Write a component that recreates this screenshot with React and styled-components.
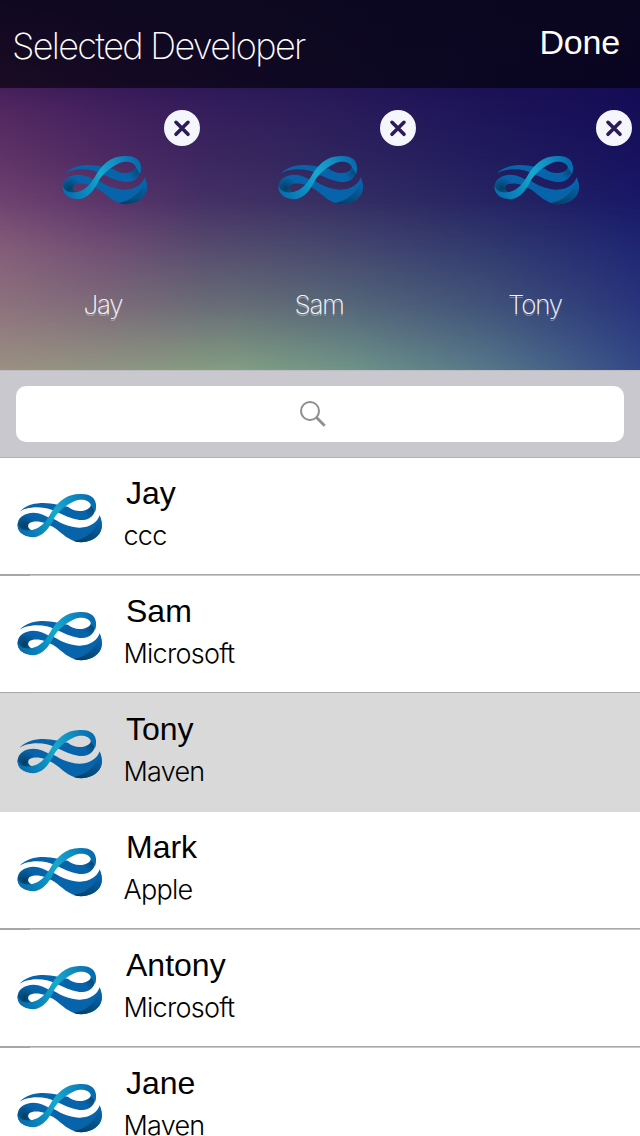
import React, { useState } from 'react';
import styled, { createGlobalStyle, css } from 'styled-components';

const GlobalStyle = createGlobalStyle`
  * { box-sizing: border-box; }
  body { margin: 0; background: #fff; overflow: hidden; }
`;

const light = css`
  font-family: Inter, "Liberation Sans", sans-serif;
  font-weight: 300;
`;

const Screen = styled.main`
  width: 640px;
  height: 1136px;
  overflow: hidden;
  background: #fff;
  color: #000;
  font-family: "Liberation Sans", Arial, sans-serif;
`;

const Hero = styled.section`
  position: relative;
  isolation: isolate;
  height: 370px;
  background:
    linear-gradient(180deg, rgba(30, 18, 80, 0.75) 0, rgba(30, 18, 80, 0) 110px),
    linear-gradient(90deg, #4a205c 0%, #37195a 22%, #281858 48%, #1b1056 75%, #140a54 100%);

  &::before,
  &::after {
    content: '';
    position: absolute;
    inset: 0;
    z-index: -1;
  }
  &::before {
    background: linear-gradient(90deg, #805478 0%, #6b4272 16%, #4e3d6b 32%, #403b69 50%, #2c3069 75%, #1c2070 100%);
    mask-image: linear-gradient(180deg, transparent 80px, rgba(0, 0, 0, 0.4) 160px, #000 250px);
  }
  &::after {
    background: linear-gradient(90deg, #9c9282 0%, #8f9982 20%, #84a283 37%, #70978a 55%, #587a8b 76%, #354b88 100%);
    mask-image: linear-gradient(180deg, transparent 200px, rgba(0, 0, 0, 0.16) 250px, rgba(0, 0, 0, 0.48) 305px, #000 375px);
  }
`;

const Header = styled.header`
  display: flex;
  justify-content: space-between;
  height: 88px;
  padding: 0 20px 0 12px;
  background: rgba(0, 0, 0, 0.6);
  color: #fff;
`;

const Title = styled.h1`
  margin: 0;
  font-family: Inter, "Liberation Sans", sans-serif;
  font-size: 36px;
  font-weight: 200;
  line-height: 92px;
  letter-spacing: -1.65px;
`;

const DoneButton = styled.button`
  align-self: flex-start;
  padding: 0;
  border: 0;
  background: none;
  color: inherit;
  font: 34px/84px "Liberation Sans", Arial, sans-serif;
  letter-spacing: -0.2px;
`;

const SelectedList = styled.div`
  display: flex;
  gap: 6px;
  height: 282px;
`;

const SelectedCard = styled.article`
  position: relative;
  display: flex;
  flex-direction: column;
  align-items: center;
  flex: 0 0 210px;
  padding-top: 67px;
`;

const RemoveButton = styled.button`
  position: absolute;
  top: 22px;
  right: 10px;
  width: 36px;
  height: 36px;
  padding: 0;
  border: 0;
  border-radius: 50%;
  background: #f5f6fb;
  color: #2c1b5b;

  svg { display: block; }
`;

const SelectedName = styled.span`
  ${light}
  margin-top: 84px;
  padding-right: 4px;
  color: #f4f4f8;
  font-size: 26px;
  font-weight: 200;
  line-height: 32px;
  letter-spacing: -1.2px;
  text-shadow: 0 2px 0 rgba(255, 255, 255, 0.3);
`;

const SearchBar = styled.div`
  height: 88px;
  padding: 15px 16px;
  border-top: 1px solid #bdbcc1;
  border-bottom: 1px solid #b2b1b6;
  background: #c9c8ce;
`;

const SearchField = styled.label`
  display: flex;
  align-items: center;
  height: 56px;
  padding-left: 283px;
  border-radius: 10px;
  background: #fff;
`;

const List = styled.ul`
  margin: 0;
  padding: 0;
  list-style: none;
`;

const Row = styled.li`
  display: flex;
  height: 118px;
  padding: 35px 0 0 17px;
  background:
    linear-gradient(#a6a6a6, #a6a6a6) 0 100% / 30px 2px no-repeat,
    linear-gradient(#a9a9a9 50%, #c8c8c8 50%) 0 100% / 100% 2px no-repeat;

  ${({ $selected }) => $selected && css`
    height: 119px;
    margin-top: -1px;
    padding-top: 36px;
    background: #d9d9d9;
  `}
`;

const Details = styled.div`
  display: flex;
  flex-direction: column;
  margin: -18px 0 0 23px;
`;

const Name = styled.span`
  font-size: 32px;
  line-height: 36px;
`;

const Company = styled.span`
  ${light}
  margin: 9px 0 0 -2.5px;
  font-size: 27px;
  line-height: 32px;
  letter-spacing: -0.75px;
`;

const LogoImage = styled.svg`
  display: block;
  flex-shrink: 0;
`;

function Logo() {
  const id = React.useId();
  return (
    <LogoImage width="86" height="50" viewBox="21 24 258 150" aria-hidden="true">
      <defs>
        <linearGradient id={`${id}r`} gradientUnits="userSpaceOnUse" x1="25" y1="140" x2="258" y2="50">
          <stop offset="0" stopColor="#086baf" />
          <stop offset=".3" stopColor="#0b8dc0" />
          <stop offset=".5" stopColor="#15a9cf" />
          <stop offset=".72" stopColor="#128fc2" />
          <stop offset="1" stopColor="#0568ad" />
        </linearGradient>
        <linearGradient id={`${id}d`} gradientUnits="userSpaceOnUse" x1="264" y1="105" x2="214" y2="172">
          <stop offset="0" stopColor="#0762aa" />
          <stop offset="1" stopColor="#034066" />
        </linearGradient>
        <radialGradient id={`${id}s`} gradientUnits="userSpaceOnUse" cx="43" cy="125" r="36">
          <stop offset="0" stopColor="#033f62" />
          <stop offset="1" stopColor="#0763aa" />
        </radialGradient>
        <radialGradient id={`${id}t`} gradientUnits="userSpaceOnUse" cx="249" cy="74" r="28">
          <stop offset="0" stopColor="#034b78" />
          <stop offset="1" stopColor="#0763aa" />
        </radialGradient>
      </defs>
      <path fill={`url(#${id}t)`} d="M29 80C46 61 73 54 101 54C130 54 152 63 174 65C184 74 202 81 220 77C242 73 248 59 238 48L257 57C259 83 245 104 219 105C189 105 168 92 146 83C119 69 91 65 64 68C50 69 39 73 29 80Z" />
      <path fill="#0763aa" d="M122 96C147 112 175 127 207 128C238 129 262 113 269 91C278 112 279 137 262 153C242 172 211 177 185 165C158 153 143 129 116 120Z" />
      <path fill={`url(#${id}d)`} d="M191 168C230 160 258 137 271 98C278 116 279 137 262 153C245 170 216 176 191 168Z" />
      <path fill={`url(#${id}s)`} d="M23 122C21 98 44 83 71 83C89 83 105 91 119 100L105 114C91 109 68 106 58 115C51 122 55 132 66 136L54 153C34 148 24 139 23 122Z" />
      <path fill={`url(#${id}r)`} d="M23 115C27 135 46 139 67 135C93 129 107 110 119 91C139 54 167 27 209 27C242 25 258 40 258 62C258 70 257 76 255 82C253 73 247 69 243 60C236 43 210 40 190 50C165 62 147 78 134 97C119 126 106 146 84 154C69 160 47 154 37 147C27 140 21 128 23 115Z" />
    </LogoImage>
  );
}

const CrossIcon = () => (
  <svg width="36" height="36" viewBox="0 0 36 36" fill="none" stroke="currentColor" strokeWidth="3.6" strokeLinecap="round">
    <path d="M12 12.3 24 24.3M24 12.3 12 24.3" />
  </svg>
);

const SearchIcon = () => (
  <svg width="28" height="28" viewBox="0 0 28 28" fill="none" stroke="#8e8e93">
    <circle cx="11" cy="11" r="9" strokeWidth="2" />
    <path d="M17.5 17.5 25.7 25.7" strokeWidth="2.8" />
  </svg>
);

const developers = [
  { name: 'Jay', company: 'ccc' },
  { name: 'Sam', company: 'Microsoft' },
  { name: 'Tony', company: 'Maven' },
  { name: 'Mark', company: 'Apple' },
  { name: 'Antony', company: 'Microsoft' },
  { name: 'Jane', company: 'Maven' },
];

export default function App() {
  const [selected, setSelected] = useState(['Jay', 'Sam', 'Tony']);
  return (
    <Screen>
      <GlobalStyle />
      <Hero>
        <Header>
          <Title>Selected Developer</Title>
          <DoneButton>Done</DoneButton>
        </Header>
        <SelectedList>
          {selected.map((name) => (
            <SelectedCard key={name}>
              <Logo />
              <SelectedName>{name}</SelectedName>
              <RemoveButton
                aria-label={`Remove ${name}`}
                onClick={() => setSelected(selected.filter((n) => n !== name))}
              >
                <CrossIcon />
              </RemoveButton>
            </SelectedCard>
          ))}
        </SelectedList>
      </Hero>
      <SearchBar>
        <SearchField aria-label="Search">
          <SearchIcon />
        </SearchField>
      </SearchBar>
      <List>
        {developers.map(({ name, company }) => (
          <Row key={name} $selected={name === 'Tony'}>
            <Logo />
            <Details>
              <Name>{name}</Name>
              <Company>{company}</Company>
            </Details>
          </Row>
        ))}
      </List>
    </Screen>
  );
}
